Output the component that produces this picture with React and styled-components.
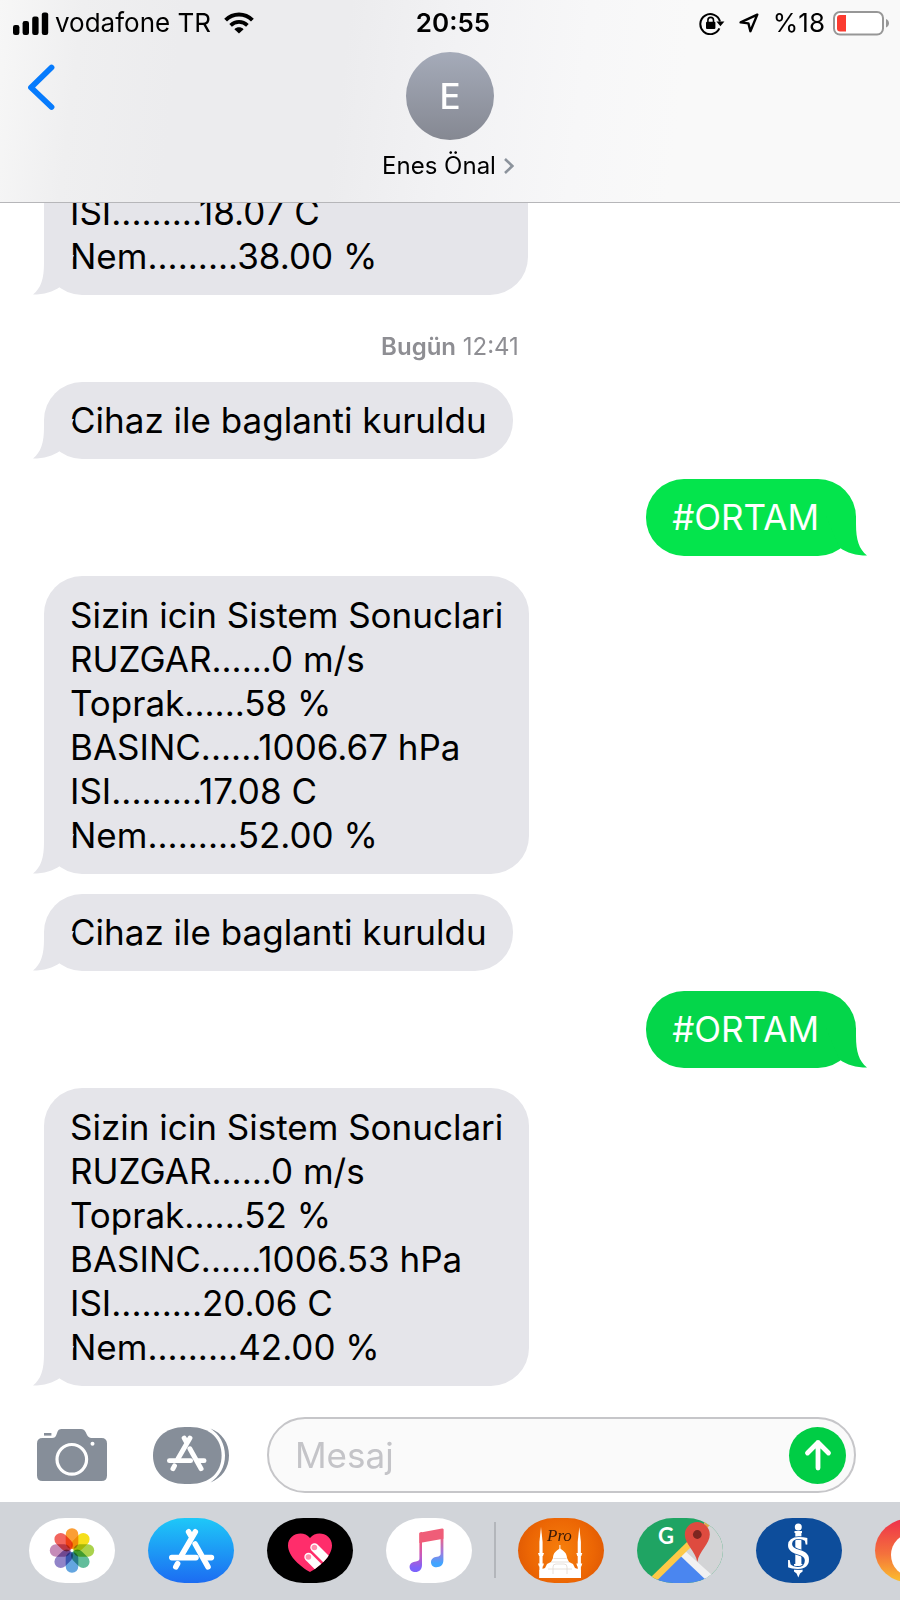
import React from "react";
import styled, { createGlobalStyle } from "styled-components";

const GlobalStyle = createGlobalStyle`
  *, *::before, *::after { box-sizing: border-box; }
  body {
    margin: 0;
    background: #fff;
    color: #000;
    font-family: Inter, "Liberation Sans", sans-serif;
  }
  button { font: inherit; color: inherit; background: none; border: 0; padding: 0; cursor: pointer; }
  svg { display: block; }
`;

const Screen = styled.div`
  display: flex;
  flex-direction: column;
  height: 100vh;
  overflow: hidden;
`;

const Header = styled.header`
  flex: none;
  border-bottom: 1px solid #b6b6b9;
  background: linear-gradient(97deg, #f7f7f7 0%, #efeff0 9%, #ececee 20%, #ececee 38%, #f2f2f4 50%, #f7f7f8 64%, #f9f9f9 75%);
`;

const StatusBar = styled.div`
  display: grid;
  grid-template-columns: 1fr auto 1fr;
  align-items: center;
  height: 44px;
  padding: 2px 11px 0 13px;
  font-size: 26px;
  line-height: 28px;
`;

const StatusGroup = styled.div`
  display: flex;
  align-items: center;
  gap: ${(p) => p.$gap}px;
  justify-content: ${(p) => (p.$end ? "flex-end" : "flex-start")};
`;

const Clock = styled.time`
  font-weight: 600;
  padding-left: 4px;
`;

const NavRow = styled.div`
  display: grid;
  grid-template-columns: 1fr auto 1fr;
  align-items: start;
  padding: 8px 26px 22px;
`;

const BackButton = styled.button`
  justify-self: start;
  padding-top: 11px;
`;

const Contact = styled.button`
  display: flex;
  flex-direction: column;
  align-items: center;
  gap: 12px;
`;

const Avatar = styled.span`
  display: grid;
  place-items: center;
  width: 88px;
  height: 88px;
  border-radius: 50%;
  background: linear-gradient(#a5abb9, #858892);
  color: #fff;
  font-size: 35px;
  font-weight: 500;
`;

const ContactName = styled.span`
  display: flex;
  align-items: center;
  gap: 8px;
  padding-right: 4px;
  font-size: 24px;
  line-height: 28px;
`;

const Thread = styled.main`
  flex: 1;
  min-height: 0;
  overflow: hidden;
  display: flex;
  flex-direction: column;
  justify-content: flex-end;
  gap: 20px;
  padding: 0 44px 31px;
`;

const Stamp = styled.p`
  margin: 18px 0 1px;
  text-align: center;
  color: #8e8e93;
  font-size: 24px;
  line-height: 28px;
  b { font-weight: 600; }
`;

const Bubble = styled.article`
  position: relative;
  flex: none;
  align-self: ${(p) => (p.$sent ? "flex-end" : "flex-start")};
  padding: ${(p) => (p.$wide ? 17 : 16)}px ${(p) => (p.$sent ? 37 : 26)}px 17px 26px;
  border-radius: ${(p) => (p.$continued ? "0 0 38px 38px" : "38px")};
  background: ${(p) => p.$fill};
  color: ${(p) => (p.$sent ? "#fff" : "#000")};
  font-size: 35px;
  line-height: 44px;
  min-width: ${(p) => (p.$wide ? "484px" : "0")};
`;

const Line = styled.div`
  white-space: nowrap;
`;

const Tail = styled.svg`
  position: absolute;
  bottom: 0;
  ${(p) => (p.$sent ? "right: -11px; transform: scaleX(-1);" : "left: -11px;")}
`;

const Composer = styled.form`
  flex: none;
  display: flex;
  align-items: center;
  padding: 0 44px 9px 37px;
`;

const ToolButton = styled.button`
  flex: none;
  margin-right: ${(p) => p.$after}px;
`;

const Field = styled.div`
  flex: 1;
  min-width: 0;
  display: flex;
  align-items: center;
  height: 76px;
  padding: 0 8px 0 26px;
  border: 2px solid #c6c6c9;
  border-radius: 38px;
  background: #fafafa;
`;

const MessageInput = styled.input`
  flex: 1;
  min-width: 0;
  border: 0;
  outline: 0;
  padding: 0;
  background: transparent;
  color: #000;
  font: 400 35px/44px Inter, "Liberation Sans", sans-serif;
  &::placeholder { color: #c4c4c8; opacity: 1; }
`;

const SendButton = styled.button`
  display: grid;
  place-items: center;
  width: 57px;
  height: 57px;
  border-radius: 50%;
  background: #00cd45;
`;

const Dock = styled.nav`
  flex: none;
  display: flex;
  align-items: center;
  gap: 33px;
  height: 98px;
  padding: 0 0 2px 29px;
  overflow: hidden;
  background: #d1d4d9;
`;

const DockApp = styled.button`
  flex: none;
  width: 86px;
  height: 65px;
  border-radius: 37px / 33px;
  overflow: hidden;
  background: ${(p) => p.$fill};
`;

const Divider = styled.span`
  flex: none;
  width: 2px;
  height: 56px;
  margin: 0 -11px;
  background: #b3b6bb;
`;

function SignalIcon() {
  return (
    <svg width="36" height="23" viewBox="0 0 36 23" aria-hidden="true">
      <rect x="0" y="13" width="6.4" height="10" rx="2.2" />
      <rect x="9.6" y="9" width="6.4" height="14" rx="2.2" />
      <rect x="19.2" y="4.6" width="6.4" height="18.4" rx="2.2" />
      <rect x="28.8" y="0.4" width="6.4" height="22.6" rx="2.2" />
    </svg>
  );
}

function WifiIcon() {
  return (
    <svg width="30" height="22" viewBox="0 0 30 22" fill="none" stroke="#000" aria-hidden="true">
      <path d="M1.6 8.2C9.2 .7 20.8 .7 28.4 8.2" strokeWidth="4" />
      <path d="M6.6 13.3C11.4 8.7 18.6 8.7 23.4 13.3" strokeWidth="3.7" />
      <path d="M10.4 17.2C13 14.7 17 14.7 19.6 17.2L15 21.6Z" fill="#000" stroke="none" />
    </svg>
  );
}

function LockIcon() {
  return (
    <svg width="26" height="23" viewBox="0 0 26 23" fill="none" stroke="#000" aria-hidden="true">
      <path d="M20.4 16.4A10 10 0 1 1 21 9.6" strokeWidth="2" />
      <path d="M17.4 9.6H25.4L21.4 14.2Z" fill="#000" stroke="none" />
      <rect x="7" y="9.8" width="9.4" height="7.2" rx="1" fill="#000" stroke="none" />
      <path d="M8.9 10V8.2A2.8 2.8 0 0 1 14.5 8.2V10" strokeWidth="1.6" />
    </svg>
  );
}

function LocationIcon() {
  return (
    <svg width="20" height="20" viewBox="0 0 20 20" fill="none" stroke="#000" strokeWidth="2.4" strokeLinejoin="round" aria-hidden="true">
      <path d="M18.3 1.6L1.6 9.4L9.4 10.4L11.4 18.2Z" />
    </svg>
  );
}

function BatteryIcon() {
  return (
    <svg width="56" height="25" viewBox="0 0 56 25" aria-hidden="true">
      <rect x="1" y="1" width="49" height="22.6" rx="6" fill="#fff" stroke="#979797" strokeWidth="2" />
      <path d="M7 4H13V20.4H7Q4 20.4 4 17.4V7Q4 4 7 4Z" fill="#fb3b30" />
      <path d="M53 8Q56 9.4 56 12.3Q56 15.2 53 16.6Z" fill="#979797" />
    </svg>
  );
}

function CameraIcon() {
  return (
    <svg width="70" height="52" viewBox="0 0 70 52" aria-hidden="true">
      <path fill="#868e99" d="M5.5 9H15Q18.5 9 19.5 5.5L20.4 3Q21.3 0 24.5 0H44Q47.2 0 48.6 3L49.8 5.6Q51.3 9 54.5 9H64.5Q70 9 70 14.5V46.5Q70 52 64.5 52H5.5Q0 52 0 46.5V14.5Q0 9 5.5 9Z" />
      <rect x="7" y="4" width="7.4" height="2.6" fill="#868e99" />
      <circle cx="34.8" cy="30.3" r="14.8" fill="none" stroke="#fff" strokeWidth="3.2" />
      <circle cx="55.5" cy="14.7" r="2" fill="#fff" />
    </svg>
  );
}

function StoreGlyph({ transform }) {
  return (
    <g transform={transform} fill="none" stroke="#fff" strokeWidth="5.6" strokeLinecap="round">
      <path d="M47.3 13.8L33.6 37.4M29.6 45.6L27.8 48.8" />
      <path d="M40.6 13.8L42.8 17.6M47.2 26L60 48.8" />
      <path d="M23.8 39.6H48M57 39.6H63.4" />
    </g>
  );
}

function StoreStackIcon() {
  return (
    <svg width="76" height="57" viewBox="0 0 76 57" aria-hidden="true">
      <path fill="#868e99" d="M32 0H37C57 0 68.600 12 68.600 28.500S57 57 37 57H32C12 57 0 45 0 28.500S12 0 32 0Z" />
      <path fill="#868e99" d="M57.500 1.600C69 6 76 16 76 28.500S69 51 57.500 55.400C66.500 49.500 72 40 72 28.500S66.500 7.500 57.500 1.600Z" />
      <StoreGlyph transform="translate(-4.400 -1) scale(.875)" />
    </svg>
  );
}

const petals = ["#fb9e35", "#f5df1b", "#aad24c", "#62bd9b", "#64a6e0", "#9184c8", "#c58bb8", "#f2655e"];

function PhotosArt() {
  return (
    <svg width="86" height="65" viewBox="0 0 86 65" aria-hidden="true">
      {petals.map((color, i) => (
        <rect
          key={color}
          x="36.700"
          y="10.300"
          width="12.600"
          height="20.800"
          rx="6.200"
          fill={color}
          transform={`rotate(${i * 45} 43 32.500)`}
          style={{ mixBlendMode: "multiply" }}
        />
      ))}
    </svg>
  );
}

function StoreArt() {
  return (
    <svg width="86" height="65" viewBox="0 0 86 65" aria-hidden="true">
      <StoreGlyph />
    </svg>
  );
}

function HeartArt() {
  const heart = "M43 54C34 49 21 38.500 21 27.500C21 16 36 11.500 43 20C50 11.500 65 16 65 27.500C65 38.500 52 49 43 54Z";
  return (
    <svg width="86" height="65" viewBox="0 0 86 65" aria-hidden="true">
      <clipPath id="heart"><path d={heart} /></clipPath>
      <path d={heart} fill="#ff2d6b" />
      <g clipPath="url(#heart)" stroke="#fff" strokeWidth="8.400" strokeLinecap="round">
        <path d="M47.500 29.500L67 49" />
        <path d="M41.500 39L61 58.500" />
      </g>
      <circle cx="47.400" cy="29.500" r="2.800" fill="#ff8eac" />
      <circle cx="41.400" cy="39" r="2.800" fill="#ff8eac" />
    </svg>
  );
}

function MusicArt() {
  return (
    <svg width="86" height="65" viewBox="0 0 86 65" aria-hidden="true">
      <defs>
        <linearGradient id="noteLeft" x1="0" y1="0" x2="0" y2="1">
          <stop offset="0.200" stopColor="#f8566f" /><stop offset="0.600" stopColor="#c55ac0" /><stop offset="0.900" stopColor="#7c62fb" />
        </linearGradient>
        <linearGradient id="noteRight" x1="0" y1="0" x2="0" y2="1">
          <stop offset="0.200" stopColor="#f3617d" /><stop offset="0.600" stopColor="#a278dc" /><stop offset="0.900" stopColor="#41a5ff" />
        </linearGradient>
      </defs>
      <path fill="url(#noteLeft)" d="M33.400 14.800L36 14V47C36 51.500 33 54 29.500 54C26 54 23.600 52 23.600 49C23.600 45.500 26.500 43.700 30 43.400C32.500 43.200 33.400 42.600 33.400 40.600Z" />
      <path fill="url(#noteRight)" d="M54.600 12L57.400 11V42C57.400 47 54.500 49.200 50.500 49.200C47.300 49.200 45 47.300 45 44.200C45 41 47.500 39.200 51 38.700C53.200 38.400 54.600 37.700 54.600 36Z" />
      <path fill="#ef5d78" d="M33.400 16Q33.400 14.700 34.700 14.400L56 10.600Q57.400 10.300 57.400 11.700V20.800L33.400 25Z" />
    </svg>
  );
}

const ScriptLabel = styled.text`
  font: italic 17px "Liberation Serif", serif;
`;

function MosqueArt() {
  return (
    <svg width="86" height="65" viewBox="0 0 86 65" aria-hidden="true">
      <g fill="#fff">
        <path d="M23 9L24.600 24V60H21.400V24Z" />
        <path d="M61.300 9L62.900 24V60H59.700V24Z" />
        <path d="M20 35H26L25 38H21ZM20 45.500H26L25 48.500H21ZM58.300 35H64.300L63.300 38H59.300ZM58.300 45.500H64.300L63.300 48.500H59.300Z" />
        <path d="M21.400 60V52L27 50L29 46L33 44L35 40C35 35 38.500 33 41.400 30.600V27H42.400V30.600C45.300 33 49 35 49 40L51 44L55 46L57 50L62.900 52V60Z" />
      </g>
      <path d="M33 44H51M35.500 40.500H48.500M30 51H54M35 56V49Q35 46 38 46H46Q49 46 49 49V56" fill="none" stroke="#dfd8d2" strokeWidth="0.800" />
      <ScriptLabel x="29" y="23" fill="#3a1a08">Pro</ScriptLabel>
    </svg>
  );
}

const LogoLetter = styled.text`
  font: ${(p) => p.$font};
`;

function MapsArt() {
  return (
    <svg width="86" height="65" viewBox="0 0 86 65" aria-hidden="true">
      <rect width="86" height="65" fill="#1fa463" />
      <path d="M68 0L86 0V65H70L45 34L66 12Z" fill="#d3d4d6" />
      <path d="M43 37L13 66H76Z" fill="#4a86f0" />
      <path d="M42.500 37L47 32L76 58L70 63Z" fill="#f1f1f2" />
      <path d="M12 61L51 23L55 28L19 63.500Z" fill="#fdc947" />
      <path d="M66 3L73 7L70 10Z" fill="#e0a948" />
      <path d="M60.300 44C58.500 33 47.800 26 47.800 16.500A12.500 12.500 0 0 1 72.800 16.500C72.800 26 62 33 60.300 44Z" fill="#de4b3f" />
      <circle cx="60.300" cy="16.500" r="4.400" fill="#7d2620" />
      <LogoLetter $font='700 22px Lato, sans-serif' x="21" y="26" fill="#fff">G</LogoLetter>
    </svg>
  );
}

function BankArt() {
  return (
    <svg width="86" height="65" viewBox="0 0 86 65" aria-hidden="true">
      <g fill="#fff">
        <circle cx="42.300" cy="9" r="3.500" />
        <path d="M38.500 13H46V15H45.400V46H46.500V48H38V46H39.300V15H38.500Z" />
        <path d="M38 51.500H46.600V53.500L44 55.500L42.300 59.500L40.600 55.500L38 53.500Z" />
        <LogoLetter $font='400 49px "Liberation Serif", serif' x="42.500" y="50.500" textAnchor="middle" stroke="#0d4d9b" strokeWidth="1.600" paintOrder="stroke">S</LogoLetter>
      </g>
    </svg>
  );
}

function RingArt() {
  return (
    <svg width="86" height="65" viewBox="0 0 86 65" aria-hidden="true">
      <circle cx="38" cy="37" r="22" fill="#fff" />
    </svg>
  );
}

const GREY = "#e5e5ea";

const thread = [
  { lines: ["ISI.........18.07 C", "Nem.........38.00 %"], continued: true, wide: true },
  { day: "Bugün", time: "12:41" },
  { lines: ["Cihaz ile baglanti kuruldu"] },
  { lines: ["#ORTAM"], sent: true, fill: "#04e44c" },
  {
    wide: true,
    lines: ["Sizin icin Sistem Sonuclari", "RUZGAR......0 m/s", "Toprak......58 %", "BASINC......1006.67 hPa", "ISI.........17.08 C", "Nem.........52.00 %"],
  },
  { lines: ["Cihaz ile baglanti kuruldu"] },
  { lines: ["#ORTAM"], sent: true, fill: "#04d64a" },
  {
    wide: true,
    lines: ["Sizin icin Sistem Sonuclari", "RUZGAR......0 m/s", "Toprak......52 %", "BASINC......1006.53 hPa", "ISI.........20.06 C", "Nem.........42.00 %"],
  },
];

function Message({ lines, sent, wide, continued, fill = GREY }) {
  return (
    <Bubble $sent={sent} $wide={wide} $continued={continued} $fill={fill}>
      <Tail $sent={sent} width="41" height="40" viewBox="0 0 41 40" aria-hidden="true">
        <path fill={fill} d="M11 0V8C11 24 8 33 0 39.500C11 39.500 20 37 27.500 31.500L41 0Z" />
      </Tail>
      {lines.map((line) => <Line key={line}>{line}</Line>)}
    </Bubble>
  );
}

export default function App() {
  return (
    <Screen>
      <GlobalStyle />
      <Header>
        <StatusBar>
          <StatusGroup $gap={13}>
            <StatusGroup $gap={6}>
              <SignalIcon />
              <span>vodafone TR</span>
            </StatusGroup>
            <WifiIcon />
          </StatusGroup>
          <Clock>20:55</Clock>
          <StatusGroup $gap={14} $end>
            <LockIcon />
            <LocationIcon />
            <StatusGroup $gap={8}>
              <span>%18</span>
              <BatteryIcon />
            </StatusGroup>
          </StatusGroup>
        </StatusBar>
        <NavRow>
          <BackButton type="button" aria-label="Geri">
            <svg width="32" height="48" viewBox="0 0 32 48" fill="none" stroke="#067bfd" strokeWidth="5.800" strokeLinecap="round" strokeLinejoin="round">
              <path d="M25.500 4.500L5 24.500L25.500 44" />
            </svg>
          </BackButton>
          <Contact type="button">
            <Avatar>E</Avatar>
            <ContactName>
              Enes Önal
              <svg width="10" height="16" viewBox="0 0 10 16" fill="none" stroke="#8c939c" strokeWidth="2.600" aria-hidden="true">
                <path d="M1 1L8.400 8L1 15" />
              </svg>
            </ContactName>
          </Contact>
        </NavRow>
      </Header>

      <Thread>
        {thread.map((item, i) =>
          item.day ? (
            <Stamp key={i}><b>{item.day}</b> {item.time}</Stamp>
          ) : (
            <Message key={i} {...item} />
          )
        )}
      </Thread>

      <Composer onSubmit={(e) => e.preventDefault()}>
        <ToolButton type="button" aria-label="Kamera" $after={46}><CameraIcon /></ToolButton>
        <ToolButton type="button" aria-label="Uygulamalar" $after={38}><StoreStackIcon /></ToolButton>
        <Field>
          <MessageInput type="text" placeholder="Mesaj" aria-label="Mesaj" />
          <SendButton type="submit" aria-label="Gönder">
            <svg width="28" height="32" viewBox="0 0 28 32" fill="none" stroke="#fff" strokeWidth="4.800" strokeLinecap="round" strokeLinejoin="round">
              <path d="M14 29V3.500M3.500 14L14 3.500L24.500 14" />
            </svg>
          </SendButton>
        </Field>
      </Composer>

      <Dock aria-label="Uygulamalar">
        <DockApp type="button" aria-label="Fotoğraflar" $fill="#fff"><PhotosArt /></DockApp>
        <DockApp type="button" aria-label="App Store" $fill="linear-gradient(#1ec8f8, #1c6cf2)"><StoreArt /></DockApp>
        <DockApp type="button" aria-label="Digital Touch" $fill="#000"><HeartArt /></DockApp>
        <DockApp type="button" aria-label="Müzik" $fill="#fff"><MusicArt /></DockApp>
        <Divider />
        <DockApp type="button" aria-label="Ezan Vakti Pro" $fill="radial-gradient(circle, #f67f0c 0%, #ec6604 60%, #d95304 100%)"><MosqueArt /></DockApp>
        <DockApp type="button" aria-label="Google Maps" $fill="#d3d4d6"><MapsArt /></DockApp>
        <DockApp type="button" aria-label="İşCep" $fill="#0d4d9b"><BankArt /></DockApp>
        <DockApp type="button" aria-label="Diğer" $fill="linear-gradient(#ee2f4c, #f4713c 55%, #fbc22c)"><RingArt /></DockApp>
      </Dock>
    </Screen>
  );
}
